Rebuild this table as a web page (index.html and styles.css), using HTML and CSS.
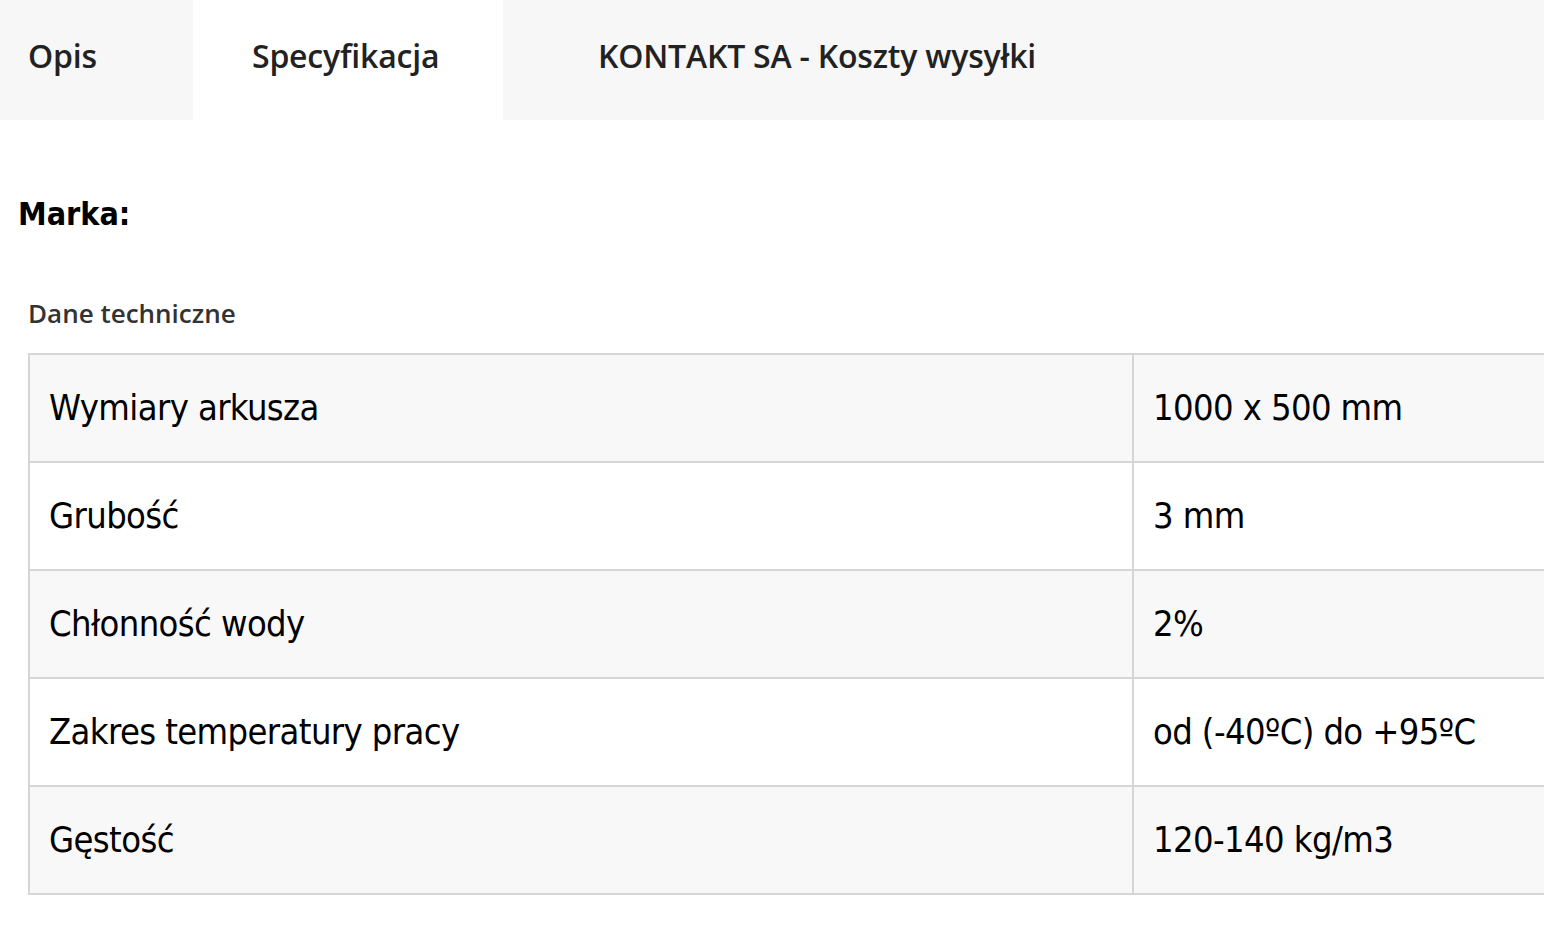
FILE: index.html
```html
<!DOCTYPE html>
<html lang="pl">
<head>
<meta charset="utf-8">
<title>Specyfikacja</title>
<link rel="stylesheet" href="styles.css">
</head>
<body>
<nav class="tabs">
  <div class="tab tab-first">Opis</div>
  <div class="tab tab-active">Specyfikacja</div>
  <div class="tab tab-last">KONTAKT SA - Koszty wysyłki</div>
</nav>
<main class="content">
  <h2 class="brand">Marka:</h2>
  <h3 class="group-title">Dane techniczne</h3>
  <table class="spec">
    <tbody>
      <tr class="odd"><td class="key">Wymiary arkusza</td><td class="val">1000 x 500 mm</td></tr>
      <tr><td class="key">Grubość</td><td class="val">3 mm</td></tr>
      <tr class="odd"><td class="key">Chłonność wody</td><td class="val">2%</td></tr>
      <tr><td class="key">Zakres temperatury pracy</td><td class="val">od (-40ºC) do +95ºC</td></tr>
      <tr class="odd"><td class="key">Gęstość</td><td class="val">120-140 kg/m3</td></tr>
    </tbody>
  </table>
</main>
</body>
</html>
```
FILE: styles.css
```css
html, body {
  margin: 0;
  padding: 0;
  background: #ffffff;
  overflow: hidden;
}
body {
  width: 1544px;
  height: 942px;
  font-family: "Open Sans", "Noto Sans", sans-serif;
  color: #222;
}
.tabs {
  display: flex;
  height: 120px;
  background: #f7f7f7;
}
.tab {
  display: flex;
  align-items: center;
  box-sizing: border-box;
  padding-bottom: 9px;
  font-family: "Open Sans", sans-serif;
  font-weight: 600;
  font-size: 32px;
  letter-spacing: -0.2px;
  color: #222;
  white-space: nowrap;
}
.tab-first {
  width: 193px;
  padding-left: 28px;
}
.tab-active {
  width: 310px;
  padding-left: 59px;
  background: #ffffff;
}
.tab-last {
  padding-left: 95px;
}
.content {
  padding-left: 28px;
}
.brand {
  margin: 74px 0 0 -10px;
  font-family: "DejaVu Sans Condensed", "DejaVu Sans", sans-serif;
  font-weight: 700;
  font-size: 32px;
  line-height: 40px;
  color: #000;
}
.group-title {
  margin: 62px 0 0 0;
  font-family: "Open Sans", sans-serif;
  font-weight: 600;
  font-size: 26px;
  line-height: 34px;
  color: #333;
}
.spec {
  margin-top: 23px;
  border-collapse: separate;
  border-spacing: 0;
  table-layout: fixed;
  width: 1604px;
  border-top: 2px solid #d6d6d6;
  border-left: 2px solid #d6d6d6;
  font-family: "DejaVu Sans Condensed", "DejaVu Sans", sans-serif;
  font-size: 36px;
  line-height: 46px;
  color: #000;
}
.spec td {
  padding: 30px 19px;
  border-right: 2px solid #d6d6d6;
  border-bottom: 2px solid #d6d6d6;
  white-space: nowrap;
  letter-spacing: -0.6px;
}
.spec td.key {
  width: 1104px;
  box-sizing: border-box;
}
.spec tr.odd td {
  background: #f8f8f8;
}
```
